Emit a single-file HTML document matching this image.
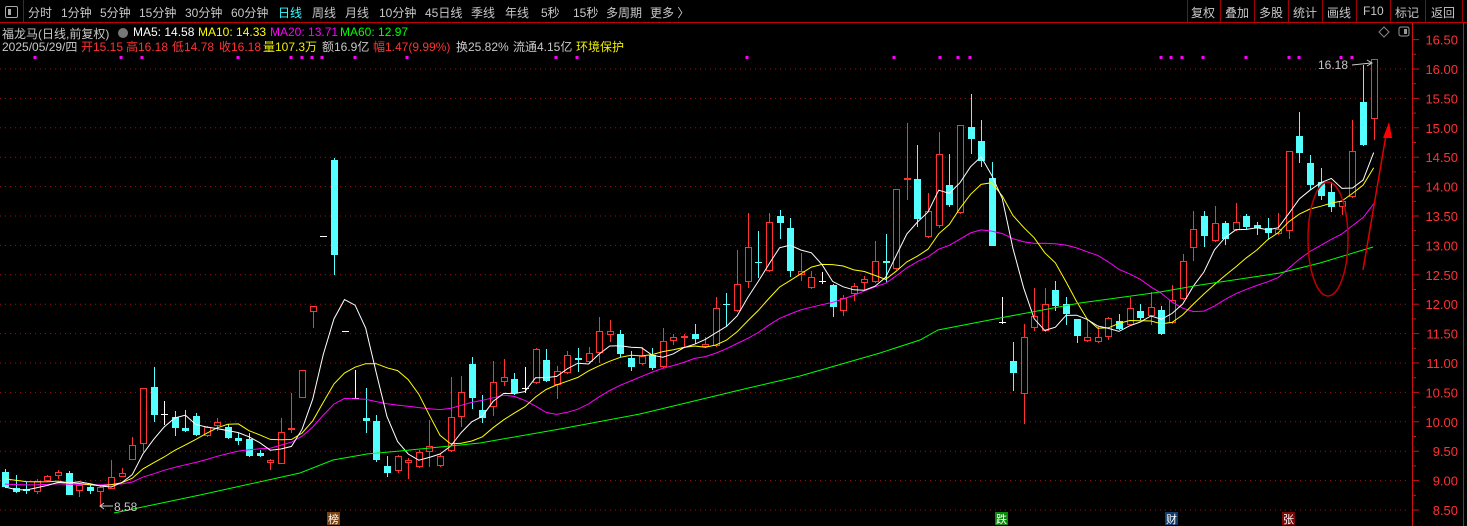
<!DOCTYPE html>
<html><head><meta charset="utf-8">
<style>
html,body{margin:0;padding:0;background:#000;width:1467px;height:526px;overflow:hidden;font-family:"Liberation Sans","Noto Sans CJK SC",sans-serif;}
.abs{position:absolute;white-space:nowrap;}
#tb{position:absolute;left:0;top:0;width:1467px;height:22px;border-bottom:1px solid #c00000;}
.t{position:absolute;top:4px;font-size:12px;color:#c8c8c8;}
.r{position:absolute;top:4px;font-size:12px;color:#c8c8c8;}
.sep{position:absolute;top:0;width:1px;height:22px;background:#a00000;}
.row{position:absolute;font-size:12px;white-space:nowrap;}
</style></head><body>
<div id="tb">
 <div class="abs" style="left:5px;top:6px;width:11px;height:10px;border:1px solid #aaa;border-radius:2px;"><div style="position:absolute;left:2px;top:2px;width:3px;height:6px;background:#aaa"></div></div>
 <div class="sep" style="left:23px"></div>
 <span class="t" style="left:28px">分时</span>
 <span class="t" style="left:61px">1分钟</span>
 <span class="t" style="left:100px">5分钟</span>
 <span class="t" style="left:139px">15分钟</span>
 <span class="t" style="left:185px">30分钟</span>
 <span class="t" style="left:231px">60分钟</span>
 <span class="t" style="left:278px;color:#3ff">日线</span>
 <span class="t" style="left:312px">周线</span>
 <span class="t" style="left:345px">月线</span>
 <span class="t" style="left:379px">10分钟</span>
 <span class="t" style="left:425px">45日线</span>
 <span class="t" style="left:471px">季线</span>
 <span class="t" style="left:505px">年线</span>
 <span class="t" style="left:541px">5秒</span>
 <span class="t" style="left:573px">15秒</span>
 <span class="t" style="left:606px">多周期</span>
 <span class="t" style="left:650px">更多 〉</span>
 <div class="sep" style="left:1187px"></div><span class="r" style="left:1191px">复权</span>
 <div class="sep" style="left:1220px"></div><span class="r" style="left:1225px">叠加</span>
 <div class="sep" style="left:1254px"></div><span class="r" style="left:1259px">多股</span>
 <div class="sep" style="left:1288px"></div><span class="r" style="left:1293px">统计</span>
 <div class="sep" style="left:1322px"></div><span class="r" style="left:1327px">画线</span>
 <div class="sep" style="left:1356px"></div><span class="r" style="left:1363px">F10</span>
 <div class="sep" style="left:1390px"></div><span class="r" style="left:1395px">标记</span>
 <div class="sep" style="left:1425px"></div><span class="r" style="left:1431px">返回</span>
 <div class="sep" style="left:1462px"></div>
</div>
<div class="row" style="left:2px;top:25px;color:#c8c8c8">福龙马(日线,前复权)</div>
<div class="abs" style="left:118px;top:28px;width:10px;height:10px;border-radius:50%;background:#777"></div>
<div class="row" style="left:133px;top:25px;color:#fff">MA5: 14.58</div>
<div class="row" style="left:198px;top:25px;color:#ff0">MA10: 14.33</div>
<div class="row" style="left:270px;top:25px;color:#f0f">MA20: 13.71</div>
<div class="row" style="left:340px;top:25px;color:#0f0">MA60: 12.97</div>
<div class="row" style="left:2px;top:38px;color:#c8c8c8">2025/05/29/四</div>
<div class="row" style="left:81px;top:38px;color:#ff3232">开15.15</div>
<div class="row" style="left:126px;top:38px;color:#ff3232">高16.18</div>
<div class="row" style="left:172px;top:38px;color:#ff3232">低14.78</div>
<div class="row" style="left:219px;top:38px;color:#ff3232">收16.18</div>
<div class="row" style="left:263px;top:38px;color:#ee0">量107.3万</div>
<div class="row" style="left:322px;top:38px;color:#c8c8c8">额16.9亿</div>
<div class="row" style="left:373px;top:38px;color:#ff3232">幅1.47(9.99%)</div>
<div class="row" style="left:456px;top:38px;color:#c8c8c8">换25.82%</div>
<div class="row" style="left:513px;top:38px;color:#c8c8c8">流通4.15亿</div>
<div class="row" style="left:576px;top:38px;color:#ee0">环境保护</div>
<svg id="s" width="1467" height="526" style="position:absolute;left:0;top:0" xmlns="http://www.w3.org/2000/svg"></svg>
<script>
var S=document.getElementById('s'),h='';
function Y(p){return 510-(p-8.5)*58.8;}
for(var p=8.5;p<=16.01;p+=0.5){var y=Y(p).toFixed(1);h+='<line x1="0" y1="'+y+'" x2="1408" y2="'+y+'" stroke="#a01010" stroke-dasharray="1,4"/>';}
h+='<line x1="1412.5" y1="23" x2="1412.5" y2="526" stroke="#d01010"/>';
h+='<line x1="1463.5" y1="23" x2="1463.5" y2="526" stroke="#d01010"/>';
for(var p=8.5;p<=16.51;p+=0.25){var y=Y(p).toFixed(1);var maj=Math.abs(p*2-Math.round(p*2))<0.01;h+='<line x1="1412" y1="'+y+'" x2="'+(maj?1419:1416)+'" y2="'+y+'" stroke="#d01010"/>';if(maj)h+='<text x="1458" y="'+(+y+5)+'" fill="#ff3232" font-size="13" text-anchor="end" font-family="Liberation Sans">'+p.toFixed(2)+'</text>';}
var C=[
['c',472,487,469,488],['c',488,492,475,493],['c',489,491,482,494],['r',481,492,479,494],['r',476,481,475,482],['r',472,476,470,479],['c',473,495,471,495],['r',485,491,484,497],['c',487,491,485,494],['r',487,492,486,507],
['r',477,489,460,489],['r',473,477,468,477],['r',445,460,437,460],['r',388,444,388,452],['c',387,415,367,422],['w',414,414,401,424],['c',417,428,411,436],['c',428,431,410,432],['c',416,435,413,436],['r',427,436,426,437],
['r',422,426,418,431],['c',427,438,424,439],['c',438,441,433,445],['c',439,456,433,457],['c',453,456,450,457],['r',460,463,459,470],['r',432,464,418,464],['r',428,430,393,433],['r',370,398,370,398],['r',306,312,306,328],
['w',236,236,236,236],['c',160,255,158,275],['w',331,331,331,331],['w',398,398,370,398],['c',418,421,388,433],['c',421,460,415,462],['c',466,473,456,477],['r',456,471,455,473],['r',460,463,458,479],['r',452,467,450,468],
['r',446,452,420,467],['r',456,466,454,467],['r',417,451,377,452],['r',392,417,376,427],['c',364,398,357,409],['c',410,418,395,423],['r',382,407,361,416],['r',377,382,359,386],['c',379,393,373,395],['w',388,388,367,392],
['r',349,383,348,384],['c',360,381,349,382],['r',371,385,366,399],['r',355,373,351,374],['c',358,360,348,372],['r',353,362,347,364],['r',331,353,317,363],['r',331,335,320,342],['c',334,354,330,357],['c',358,367,351,371],
['r',356,364,347,365],['c',355,368,348,370],['r',341,367,328,368],['r',337,341,334,345],['r',336,338,334,347],['c',334,339,324,344],['r',344,347,337,348],['r',308,346,297,347],['c',304,305,293,327],['r',284,311,250,312],
['r',247,282,213,288],['c',262,263,231,278],['r',222,271,213,272],['c',216,223,210,239],['c',228,271,218,277],['r',271,275,253,281],['r',277,288,271,289],['w',281,281,272,283],['c',285,307,284,317],['r',298,311,295,316],
['r',286,294,283,301],['r',279,283,276,291],['r',261,282,241,283],['c',261,263,234,282],['r',189,269,189,270],['r',178,179,123,200],['c',179,219,145,227],['r',211,237,193,238],['r',154,226,132,228],['c',185,205,154,207],
['r',125,213,125,214],['c',127,139,94,154],['c',141,161,120,167],['c',178,246,162,246],['w',322,322,297,323],['c',361,373,342,391],['r',337,394,324,424],['r',316,328,288,331],['r',304,331,288,332],['c',290,306,281,311],
['c',304,314,297,325],['c',319,336,319,343],['r',337,341,320,342],['r',337,342,327,343],['r',318,337,317,340],['c',321,329,314,330],['r',308,325,297,326],['c',311,318,304,320],['r',307,316,292,325],['c',310,334,306,335],
['r',300,323,285,324],['r',261,299,254,300],['r',229,248,211,261],['c',216,236,211,247],['r',223,241,206,242],['c',223,239,221,245],['r',222,230,203,231],['c',216,227,214,229],['c',225,228,222,235],['c',228,233,218,239],
['r',229,234,213,235],['r',151,231,151,239],['c',136,153,112,163],['c',163,185,155,190],['c',182,196,168,200],['c',192,207,182,212],['r',201,207,200,215],['r',151,197,120,198],['c',102,145,65,146],['r',59,119,59,140]
];
var X=function(i){return 5+10.61*i;};
var closes=[];
C.forEach(function(c,i){var x=Math.round(X(i))+0.5;var col=c[0]=='r'?'#ff3232':(c[0]=='c'?'#54ffff':'#fff');
 closes.push(c[0]=='r'?c[1]:c[2]);
 if(c[0]=='w'){h+='<line x1="'+x+'" y1="'+c[3]+'" x2="'+x+'" y2="'+(c[4]+1)+'" stroke="#fff"/><line x1="'+(x-3.5)+'" y1="'+(c[1]+0.5)+'" x2="'+(x+3.5)+'" y2="'+(c[1]+0.5)+'" stroke="#fff"/>';return;}
 h+='<line x1="'+x+'" y1="'+c[3]+'" x2="'+x+'" y2="'+c[1]+'" stroke="'+col+'"/><line x1="'+x+'" y1="'+c[2]+'" x2="'+x+'" y2="'+c[4]+'" stroke="'+col+'"/>';
 var bh=Math.max(c[2]-c[1],1);
 if(c[0]=='r')h+='<rect x="'+(x-3)+'" y="'+(c[1]+0.5)+'" width="6" height="'+Math.max(bh-1,1)+'" fill="#000" stroke="'+col+'"/>';
 else h+='<rect x="'+(x-3.5)+'" y="'+c[1]+'" width="7" height="'+bh+'" fill="'+col+'"/>';
});
function ma(n,col){var pts=[];for(var i=0;i<closes.length;i++){var s=0,k=0;for(var j=Math.max(0,i-n+1);j<=i;j++){s+=closes[j];k++;}
 var v=s/k; if(n==20&&i<20){v=(s+(20-k)*484)/20;} if(n==10&&i<10){v=(s+(10-k)*478)/10;}
 pts.push(X(i).toFixed(1)+','+v.toFixed(1));}
 h+='<polyline points="'+pts.join(' ')+'" fill="none" stroke="'+col+'" stroke-width="1"/>';}
ma(20,'#ff00ff');ma(10,'#ffff00');ma(5,'#ffffff');
h+='<polyline points="114,513 200,495 300,473 333,460 367,454 400,451 480,443 560,429 640,414 740,390 800,376 880,353 920,340 938,330 1000,318 1080,303 1160,292 1200,285 1280,273 1320,263 1373,247" fill="none" stroke="#00ff00"/>';
[35,121,142,238,291,302,312,322,355,407,556,577,747,894,940,958,970,1161,1171,1182,1203,1246,1289,1299,1341,1352].forEach(function(x){h+='<rect x="'+(x-1.5)+'" y="56" width="3" height="3" fill="#ff00ff"/>';});
h+='<text x="1318" y="69" fill="#c8c8c8" font-size="12" font-family="Liberation Sans">16.18</text><polyline points="1352,65 1371,63" stroke="#c8c8c8" fill="none"/><polyline points="1367,60 1372,63 1367,66" stroke="#c8c8c8" fill="none"/>';
h+='<polyline points="100,506 113,506" stroke="#c8c8c8"/><polyline points="104,503 100,506 104,509" stroke="#c8c8c8" fill="none"/><text x="114" y="511" fill="#c8c8c8" font-size="12" font-family="Liberation Sans">8.58</text>';
h+='<ellipse cx="1328" cy="239" rx="20" ry="57" fill="none" stroke="#c00000" stroke-width="1.5"/>';
h+='<line x1="1363" y1="270" x2="1386" y2="135" stroke="#e00000" stroke-width="1.5"/><polygon points="1389,122 1383,138 1392,138" fill="#ff0000"/>';
h+='<polygon points="1384,27 1389,32 1384,37 1379,32" fill="none" stroke="#888"/><rect x="1399" y="27" width="10" height="9" rx="2" fill="none" stroke="#999"/><rect x="1404" y="29" width="3" height="5" fill="#999"/>';
function mk(x,bg,t){h+='<rect x="'+x+'" y="512" width="13" height="13" fill="'+bg+'"/><text x="'+(x+6.5)+'" y="523" fill="#fff" font-size="11" text-anchor="middle" font-family="Noto Sans CJK SC,sans-serif">'+t+'</text>';}
mk(327,'#7a4210','榜');mk(995,'#0a8a0a','跌');mk(1165,'#123a6a','财');mk(1282,'#7a0a0a','张');
S.innerHTML=h;
</script>
</body></html>
